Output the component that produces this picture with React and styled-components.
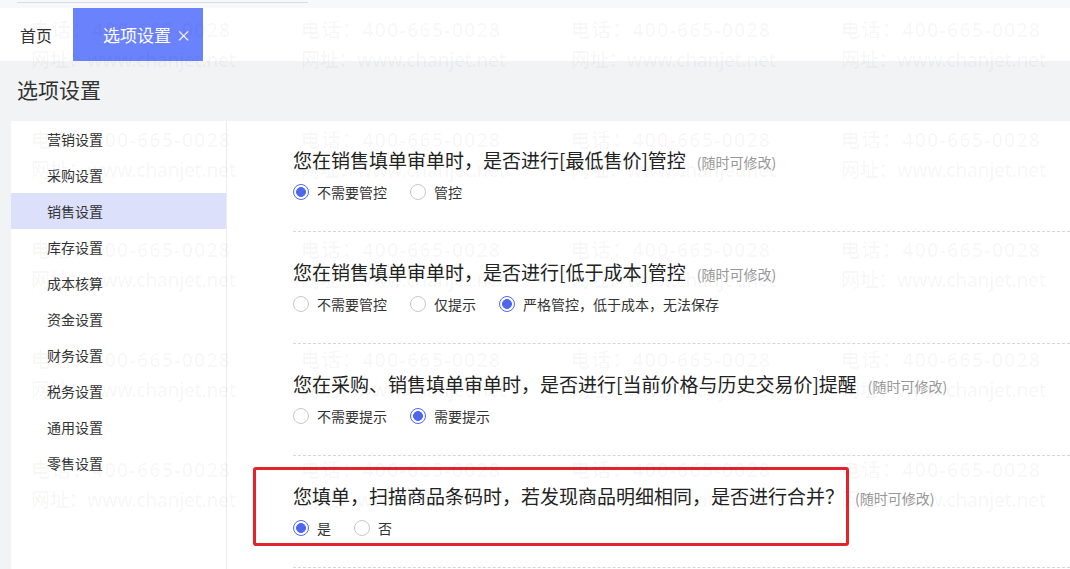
import styled, { createGlobalStyle } from 'styled-components';

const GlobalStyle = createGlobalStyle`
  html, body {
    margin: 0;
    padding: 0;
    background: #f2f3f5;
    font-family: "Noto Sans CJK SC", "Noto Sans", sans-serif;
    color: #333;
  }
`;

const Page = styled.div`
  position: relative;
  min-height: 100vh;
  overflow: hidden;
`;

const TopStrip = styled.div`
  height: 8px;
  background: #f7f8fc;
  padding-top: 2px;
  box-sizing: border-box;
`;

const Ruler = styled.div`
  margin-left: 17px;
  width: 291px;
  height: 1px;
  background: #d8dbe0;
`;

const TabBar = styled.div`
  height: 53px;
  background: #fff;
  display: flex;
`;

const Tab = styled.div`
  display: flex;
  align-items: center;
  padding: ${(p) => (p.$active ? '0 12px 0 30px' : '0 21px 0 20px')};
  font-size: ${(p) => (p.$active ? '17px' : '16px')};
  color: ${(p) => (p.$active ? '#fff' : '#333')};
  background: ${(p) => (p.$active ? '#6a82fb' : 'transparent')};
`;

const Close = styled.span`
  margin-left: 5px;
  font-size: 15px;
  line-height: 1;
`;

const PageTitle = styled.div`
  height: 60px;
  display: flex;
  align-items: center;
  padding: 0 0 5px 17px;
  box-sizing: border-box;
  font-size: 21px;
  color: #333;
`;

const Panel = styled.div`
  margin-left: 11px;
  display: flex;
  background: #fff;
  min-height: calc(100vh - 121px);
`;

const Sidebar = styled.ul`
  list-style: none;
  margin: 0;
  padding: 0;
  width: 215px;
  border-right: 1px solid #ececec;
`;

const MenuItem = styled.li`
  height: 36px;
  display: flex;
  align-items: center;
  padding-left: 36px;
  font-size: 14px;
  color: #333;
  background: ${(p) => (p.$active ? '#dde0fb' : 'transparent')};
`;

const Content = styled.div`
  flex: 1;
  padding-left: 66px;
`;

const Section = styled.div`
  position: relative;
  padding: 27px 0 29px;
  border-bottom: 1px dashed #d6d6d6;
  & + & {
    padding-top: 28px;
  }
`;

const Question = styled.div`
  display: flex;
  align-items: baseline;
  height: 24px;
  line-height: 24px;
  font-size: 19px;
  color: #222;
`;

const Hint = styled.span`
  margin-left: 11px;
  font-size: 14px;
  color: #999;
`;

const Options = styled.div`
  display: flex;
  align-items: center;
  height: 20px;
  margin-top: 10px;
`;

const Option = styled.label`
  display: flex;
  align-items: center;
  margin-right: 23px;
  font-size: 14px;
  color: #333;
`;

const Circle = styled.span`
  box-sizing: border-box;
  width: 16px;
  height: 16px;
  border-radius: 50%;
  margin-right: 8px;
  border: 1px solid ${(p) => (p.$checked ? '#5067f2' : '#c9c9c9')};
  background: ${(p) => (p.$checked ? 'radial-gradient(circle, #5067f2 0 4.6px, #fff 5.2px)' : '#fff')};
`;

const Highlight = styled.div`
  position: absolute;
  top: 11px;
  left: -40px;
  width: 596px;
  height: 79px;
  box-sizing: border-box;
  border: 3px solid #e5232a;
  border-radius: 3px;
  pointer-events: none;
`;

const Watermark = styled.div`
  position: absolute;
  inset: 0;
  pointer-events: none;
  display: grid;
  grid-template-columns: repeat(4, 270px);
  grid-auto-rows: 110px;
  padding: 15px 0 0 31px;
  z-index: 10;
`;

const Mark = styled.div`
  font-family: "Noto Sans", "Noto Sans CJK SC", sans-serif;
  font-size: 19px;
  font-weight: 500;
  line-height: 30px;
  letter-spacing: ${(p) => p.$spacing || 0}px;
  color: rgba(0, 0, 0, 0.045);
  white-space: nowrap;
`;

const menu = ['营销设置', '采购设置', '销售设置', '库存设置', '成本核算', '资金设置', '财务设置', '税务设置', '通用设置', '零售设置'];

const questions = [
  { text: '您在销售填单审单时，是否进行[最低售价]管控', options: ['不需要管控', '管控'], checked: 0 },
  { text: '您在销售填单审单时，是否进行[低于成本]管控', options: ['不需要管控', '仅提示', '严格管控，低于成本，无法保存'], checked: 2 },
  { text: '您在采购、销售填单审单时，是否进行[当前价格与历史交易价]提醒', options: ['不需要提示', '需要提示'], checked: 1 },
  { text: '您填单，扫描商品条码时，若发现商品明细相同，是否进行合并？', options: ['是', '否'], checked: 0, marked: true },
];

function App() {
  return (
    <Page>
      <GlobalStyle />
      <TopStrip><Ruler /></TopStrip>
      <TabBar>
        <Tab>首页</Tab>
        <Tab $active>选项设置<Close>×</Close></Tab>
      </TabBar>
      <PageTitle>选项设置</PageTitle>
      <Panel>
        <Sidebar>
          {menu.map((m) => (
            <MenuItem key={m} $active={m === '销售设置'}>{m}</MenuItem>
          ))}
        </Sidebar>
        <Content>
          {questions.map((q) => (
            <Section key={q.text}>
              <Question>{q.text}<Hint>(随时可修改)</Hint></Question>
              <Options>
                {q.options.map((o, i) => (
                  <Option key={o}>
                    <Circle $checked={i === q.checked} />
                    {o}
                  </Option>
                ))}
              </Options>
              {q.marked && <Highlight />}
            </Section>
          ))}
        </Content>
      </Panel>
      <Watermark>
        {Array.from({ length: 24 }).map((_, i) => (
          <div key={i}>
            <Mark $spacing={1.5}>电话：400-665-0028</Mark>
            <Mark $spacing={-0.3}>网址：www.chanjet.net</Mark>
          </div>
        ))}
      </Watermark>
    </Page>
  );
}

export default App;
